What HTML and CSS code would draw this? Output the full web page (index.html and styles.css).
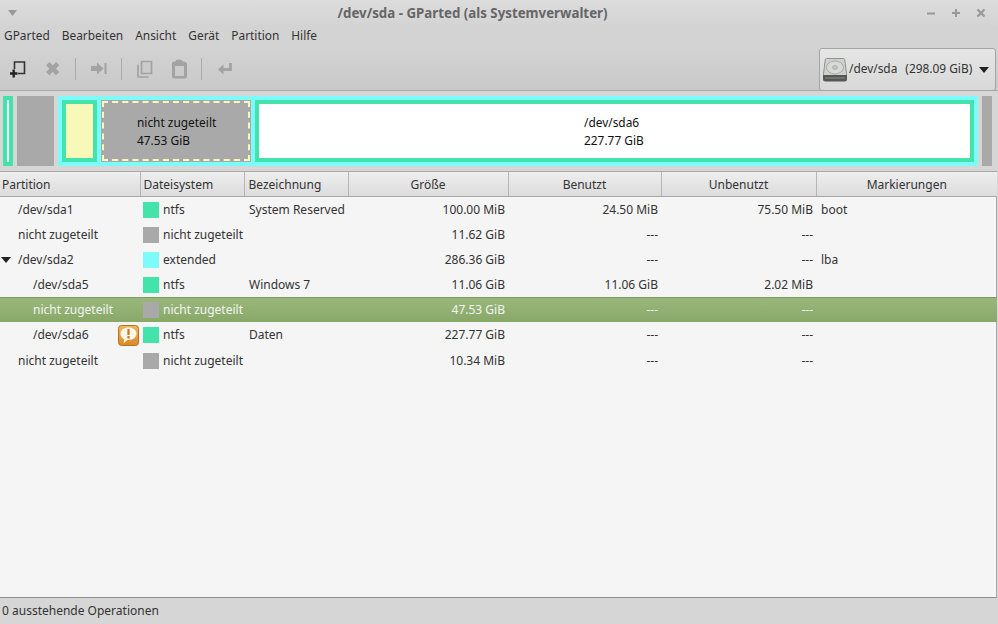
FILE: index.html
```html
<!DOCTYPE html>
<html lang="de">
<head>
  <meta charset="UTF-8">
  <title>/dev/sda - GParted (als Systemverwalter)</title>
  <link rel="stylesheet" href="styles.css">
</head>
<body>
  <div class="window">
    <header class="titlebar">
      <svg class="win-menu" width="12" height="8" viewBox="0 0 12 8"><path d="M1 1h9L5.500 7z" fill="#999"/></svg>
      <h1 class="title">/dev/sda - GParted (als Systemverwalter)</h1>
      <div class="win-buttons">
        <svg width="10" height="10" viewBox="0 0 10 10"><path d="M1 5.500h8" stroke="#999" stroke-width="2"/></svg>
        <svg width="10" height="10" viewBox="0 0 10 10"><path d="M1 5h8M5 1v8" stroke="#999" stroke-width="2"/></svg>
        <svg width="10" height="10" viewBox="0 0 10 10"><path d="M1.500 1.500l7 7M8.500 1.500l-7 7" stroke="#999" stroke-width="2.200"/></svg>
      </div>
    </header>

    <nav class="menubar">
      <span>GParted</span>
      <span>Bearbeiten</span>
      <span>Ansicht</span>
      <span>Gerät</span>
      <span>Partition</span>
      <span>Hilfe</span>
    </nav>

    <div class="toolbar">
      <div class="tools">
        <svg class="tool tool-new" width="18" height="18" viewBox="0 0 18 18">
          <path d="M5.500 9V2h10v11.500H9" fill="none" stroke="#333" stroke-width="1.600"/>
          <path d="M1 13.500h7.500M4.700 9.500v8" stroke="#222" stroke-width="2.400"/>
        </svg>
        <svg class="tool tool-delete" width="18" height="18" viewBox="0 0 18 18">
          <path d="M3.700 3.700l10 10M13.700 3.700l-10 10" stroke="#a3a3a3" stroke-width="4.600"/>
        </svg>
        <i class="tool-sep"></i>
        <svg class="tool tool-resize" width="18" height="18" viewBox="0 0 18 18">
          <path d="M1 6h6V2.500l6.500 6-6.500 6V11H1z" fill="#a3a3a3"/>
          <path d="M15.500 3v11" stroke="#a3a3a3" stroke-width="2"/>
        </svg>
        <i class="tool-sep"></i>
        <svg class="tool tool-copy" width="18" height="18" viewBox="0 0 18 18">
          <path d="M5.500 1.500h10v12h-10z" fill="#cbcbcb" stroke="#a3a3a3" stroke-width="1.700"/>
          <path d="M2 4.500v12.500h10.500" fill="none" stroke="#a3a3a3" stroke-width="1.700"/>
        </svg>
        <svg class="tool tool-paste" width="18" height="20" viewBox="0 0 18 20">
          <path d="M2 4.500q0-2 2-2h1.500q0-2 3.500-2t3.500 2H14q2 0 3 2v13q0 2-2 2H4q-2 0-2-2z" fill="#a3a3a3"/>
          <path d="M5 7h9v10H5z" fill="#cbcbcb"/>
        </svg>
        <i class="tool-sep"></i>
        <svg class="tool tool-apply" width="18" height="18" viewBox="0 0 18 18">
          <path d="M14.500 3v6.500H6" fill="none" stroke="#a3a3a3" stroke-width="2.800"/>
          <path d="M7.500 4.500L2 9.500 7.500 14.500z" fill="#a3a3a3"/>
        </svg>
      </div>
      <button class="device">
        <svg width="24" height="24" viewBox="0 0 24 24">
          <path d="M3.500 0.500h17q1 0 1.200 1l2 16H0.300l2-16q.2-1 1.200-1z" fill="#cfd1ce" stroke="#8e908d"/>
          <ellipse cx="12" cy="9.500" rx="8.500" ry="6.500" fill="#d9dad8" stroke="#a9aba8"/>
          <ellipse cx="12" cy="9.500" rx="2.500" ry="1.800" fill="#c6c8c5" stroke="#a9aba8"/>
          <path d="M0 17h24v4q0 2.500-2.500 2.500h-19Q0 23.500 0 21z" fill="#555754"/>
          <path d="M2 20h20" stroke="#8e908d"/>
        </svg>
        <span class="device-name">/dev/sda<span class="device-size">(298.09 GiB)</span></span>
        <svg width="10" height="6" viewBox="0 0 10 6"><path d="M0 0h10L5 6z" fill="#222"/></svg>
      </button>
    </div>

    <section class="map">
      <div class="part ntfs sliver"></div>
      <div class="part unalloc-block small"></div>
      <div class="extended">
        <div class="part ntfs used"><div class="fill"></div></div>
        <div class="part unalloc-sel">
          <div class="dash">
            <span>nicht zugeteilt</span>
            <span>47.53 GiB</span>
          </div>
        </div>
        <div class="part ntfs big">
          <div class="white">
            <span>/dev/sda6</span>
            <span>227.77 GiB</span>
          </div>
        </div>
      </div>
      <div class="part unalloc-block tail"></div>
    </section>

    <main class="list">
      <table class="partitions">
        <colgroup>
          <col class="c-part"><col class="c-fs"><col class="c-label"><col class="c-size">
          <col class="c-used"><col class="c-free"><col class="c-flags">
        </colgroup>
        <thead>
          <tr>
            <th class="left">Partition</th>
            <th class="left th-fs">Dateisystem</th>
            <th class="left">Bezeichnung</th>
            <th>Größe</th>
            <th>Benutzt</th>
            <th>Unbenutzt</th>
            <th>Markierungen</th>
          </tr>
        </thead>
        <tbody>
          <tr>
            <td class="lvl1">/dev/sda1</td>
            <td><i class="swatch green"></i>ntfs</td>
            <td>System Reserved</td>
            <td class="num">100.00 MiB</td>
            <td class="num">24.50 MiB</td>
            <td class="num">75.50 MiB</td>
            <td>boot</td>
          </tr>
          <tr>
            <td class="lvl1">nicht zugeteilt</td>
            <td><i class="swatch grey"></i>nicht zugeteilt</td>
            <td></td>
            <td class="num">11.62 GiB</td>
            <td class="num">---</td>
            <td class="num">---</td>
            <td></td>
          </tr>
          <tr>
            <td class="lvl1 expander">/dev/sda2</td>
            <td><i class="swatch cyan"></i>extended</td>
            <td></td>
            <td class="num">286.36 GiB</td>
            <td class="num">---</td>
            <td class="num">---</td>
            <td>lba</td>
          </tr>
          <tr>
            <td class="lvl2">/dev/sda5</td>
            <td><i class="swatch green"></i>ntfs</td>
            <td>Windows 7</td>
            <td class="num">11.06 GiB</td>
            <td class="num">11.06 GiB</td>
            <td class="num">2.02 MiB</td>
            <td></td>
          </tr>
          <tr class="selected">
            <td class="lvl2">nicht zugeteilt</td>
            <td><i class="swatch grey"></i>nicht zugeteilt</td>
            <td></td>
            <td class="num">47.53 GiB</td>
            <td class="num">---</td>
            <td class="num">---</td>
            <td></td>
          </tr>
          <tr>
            <td class="lvl2 has-warn">/dev/sda6
              <svg class="warn" width="21" height="21" viewBox="0 0 21 21">
                <defs>
                  <linearGradient id="warnBg" x1="0" y1="0" x2="0" y2="1">
                    <stop offset="0" stop-color="#f0b560"/>
                    <stop offset="1" stop-color="#d98a2b"/>
                  </linearGradient>
                </defs>
                <rect x="0.500" y="0.500" width="20" height="20" rx="3" fill="url(#warnBg)" stroke="#b8741c"/>
                <path d="M10.500 2.500c4.400 0 8 2.500 8 6.200s-3.600 6.200-8 6.200h-1.200l-3.800 3.300.8-4C3.800 13 2.500 11 2.500 8.700c0-3.700 3.600-6.200 8-6.200z" fill="#fff8ea"/>
                <path d="M10.500 4v6M10.500 11v2.500" stroke="#c9761a" stroke-width="2.200"/>
              </svg>
            </td>
            <td><i class="swatch green"></i>ntfs</td>
            <td>Daten</td>
            <td class="num">227.77 GiB</td>
            <td class="num">---</td>
            <td class="num">---</td>
            <td></td>
          </tr>
          <tr class="last">
            <td class="lvl1">nicht zugeteilt</td>
            <td><i class="swatch grey"></i>nicht zugeteilt</td>
            <td></td>
            <td class="num">10.34 MiB</td>
            <td class="num">---</td>
            <td class="num">---</td>
            <td></td>
          </tr>
        </tbody>
      </table>
    </main>

    <footer class="statusbar">0 ausstehende Operationen</footer>
  </div>
</body>
</html>
```

FILE: styles.css
```css
html, body {
  margin: 0;
  padding: 0;
}

body {
  font-family: "Noto Sans", sans-serif;
  font-size: 12px;
  color: #333;
  background-color: #d6d6d6;
}

.window {
  display: flex;
  flex-direction: column;
  width: 998px;
  height: 624px;
  overflow: hidden;
}

.titlebar {
  display: flex;
  align-items: center;
  justify-content: space-between;
  height: 25px;
  padding: 0 12px 0 7px;
  box-sizing: border-box;
  position: relative;
  background: linear-gradient(#dcdcdc, #d4d4d4);
}

.title {
  position: absolute;
  left: 0;
  right: 53px;
  margin: 0;
  text-align: center;
  font-size: 13.3px;
  font-weight: bold;
  color: #666;
}

.win-buttons {
  display: flex;
  gap: 15px;
}

.menubar {
  display: flex;
  gap: 12px;
  height: 21px;
  font-size: 11.9px;
  line-height: 21px;
  padding-left: 4px;
  background-color: #d3d3d3;
}

.toolbar {
  display: flex;
  justify-content: space-between;
  align-items: flex-start;
  height: 45px;
  padding-right: 2px;
  box-sizing: border-box;
  background: linear-gradient(#d3d3d3, #c9c9c9);
  border-bottom: 1px solid #a8a8a8;
}

.tools {
  display: flex;
  align-items: center;
  height: 46px;
  padding-left: 9px;
}

.tool { flex: none; }
.tool-delete { margin-left: 17px; }
.tool-paste { margin-left: 16px; }

.tool-sep {
  width: 1px;
  height: 22px;
  margin: 0 14px 0 13px;
  background-color: #aaa;
}

.device {
  display: flex;
  align-items: center;
  flex: none;
  width: 177px;
  height: 43px;
  margin-top: 2px;
  padding: 0 6px 0 3px;
  box-sizing: border-box;
  position: relative;
  font: inherit;
  font-size: 11.9px;
  color: #333;
  border: 1px solid #a5a5a5;
  border-radius: 3px;
  background: linear-gradient(#e6e6e6, #d8d8d8);
}

.device-name {
  flex: 1;
  text-align: left;
  margin-left: 2px;
  padding-bottom: 4px;
  white-space: nowrap;
}

.device-size { margin-left: 8px; }

.map {
  display: flex;
  gap: 4px;
  height: 80px;
  padding: 5px 6px 5px 3px;
  box-sizing: border-box;
  font-size: 11.9px;
  background-color: #d6d6d6;
}

.part {
  box-sizing: border-box;
  flex: none;
}

.ntfs { border: 4px solid #43e3ac; }
.sliver { width: 10px; background-color: #fff; }
.small { width: 37px; }
.unalloc-block { background-color: #a9a9a9; }
.tail { width: 10px; }

.extended {
  display: flex;
  gap: 4px;
  width: 920px;
  padding: 4px 3px 4px 4px;
  box-sizing: border-box;
  background-color: #7dfbfb;
}

.used { width: 35px; }
.fill { height: 100%; background-color: #f8f8b8; }

.unalloc-sel {
  width: 150px;
  padding: 1px;
  background-color: #a9a9a9;
}

.dash {
  display: flex;
  flex-direction: column;
  justify-content: center;
  height: 100%;
  padding-left: 33px;
  box-sizing: border-box;
  line-height: 18px;
  color: #111;
  border: 2px dashed #f8f8b8;
}

.big { width: 719px; }

.white {
  display: flex;
  flex-direction: column;
  justify-content: center;
  height: 100%;
  padding-left: 325px;
  box-sizing: border-box;
  line-height: 18px;
  color: #111;
  background-color: #fff;
}

.list {
  flex: 1;
  margin: 0 1px 0 0;
  border-top: 1px solid #a8a8a8;
  border-right: 1px solid #a8a8a8;
  border-bottom: 1px solid #8e8e8e;
  background-color: #f5f5f5;
}

.partitions {
  width: 997px;
  table-layout: fixed;
  border-collapse: collapse;
}

.c-part { width: 140px; }
.c-fs { width: 104px; }
.c-label { width: 104px; }
.c-size { width: 160px; }
.c-used { width: 153px; }
.c-free { width: 155px; }
.c-flags { width: 181px; }

.partitions th {
  height: 24px;
  padding: 0;
  font-weight: normal;
  text-align: center;
  background: linear-gradient(#eeeeee, #dcdcdc);
  border-right: 1px solid #b5b5b5;
  border-bottom: 1px solid #a8a8a8;
}

.partitions th.left {
  text-align: left;
  padding-left: 4px;
}

.partitions th.th-fs { padding-left: 3px; }
.partitions th:first-child { padding-left: 2px; }
.partitions th:last-child { border-right: none; }

.partitions td {
  height: 25px;
  padding: 0 4px 0 5px;
  white-space: nowrap;
  overflow: visible;
}

.partitions td.num {
  text-align: right;
  padding-right: 3px;
}

.partitions .lvl1 { padding-left: 18px; }
.partitions .lvl2 { padding-left: 33px; position: relative; }

.partitions .last td { padding-top: 1px; }

.expander { position: relative; }

.expander::before {
  content: "";
  position: absolute;
  left: 1px;
  top: 10px;
  border-left: 5px solid transparent;
  border-right: 5px solid transparent;
  border-top: 6px solid #222;
}

.warn {
  position: absolute;
  left: 118px;
  top: 3px;
}

.swatch {
  display: inline-block;
  width: 16px;
  height: 16px;
  margin-right: 4px;
  margin-left: -2px;
  vertical-align: -4px;
}

.green { background-color: #43e3ac; }
.grey { background-color: #a9a9a9; }
.cyan { background-color: #7dfbfb; }

.selected td {
  color: #f4f4f4;
  background: linear-gradient(#9ab87c, #88a868);
  box-shadow: inset 0 1px 0 #7f9a63;
}

.statusbar {
  height: 26px;
  line-height: 26px;
  padding-left: 2px;
  background-color: #d6d6d6;
}
```
